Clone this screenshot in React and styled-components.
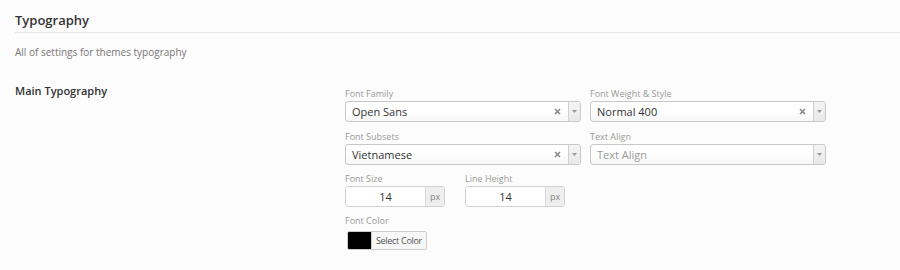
import React from "react";
import styled, { createGlobalStyle } from "styled-components";

const Global = createGlobalStyle`
  html, body { margin: 0; padding: 0; background: #fcfcfc; }
  body { font-family: "Open Sans", "Liberation Sans", sans-serif; color: #333; }
  * { box-sizing: border-box; }
`;

const Page = styled.div`
  padding: 0 0 0 15px;
`;

const Header = styled.h2`
  margin: 0;
  padding: 11px 0 3px;
  font-size: 13px;
  line-height: 18px;
  font-weight: 600;
  color: #333;
  border-bottom: 1px solid #e6e6e6;
`;

const Desc = styled.p`
  margin: 12px 0 0;
  font-size: 10px;
  line-height: 14px;
  color: #777;
`;

const Section = styled.div`
  display: flex;
  margin-top: 24px;
`;

const SectionTitle = styled.div`
  width: 330px;
  flex: none;
  font-size: 11px;
  line-height: 15px;
  font-weight: 600;
  color: #333;
`;

const Fields = styled.div`
  padding-top: 5px;
  display: flex;
  flex-direction: column;
  gap: 8px;
`;

const Row = styled.div`
  display: flex;
  gap: ${(p) => p.$gap || 9}px;
  margin-bottom: ${(p) => p.$mb || 0}px;
`;

const Field = styled.div`
  display: flex;
  flex-direction: column;
  width: ${(p) => p.$w}px;
`;

const Label = styled.label`
  font-size: 9px;
  line-height: 12px;
  color: #999;
  margin-bottom: ${(p) => p.$mb ?? 1}px;
`;

const SelectBox = styled.div`
  display: flex;
  align-items: stretch;
  height: 21px;
  border: 1px solid #c8c8c8;
  border-radius: 3px;
  background: linear-gradient(#ffffff 0%, #ffffff 50%, #f6f6f6 100%);
  overflow: hidden;
`;

const SelectValue = styled.span`
  flex: 1;
  padding-left: 6px;
  font-size: 11px;
  line-height: 19px;
  color: ${(p) => (p.$placeholder ? "#999" : "#333")};
`;

const Clear = styled.span`
  width: 22px;
  display: flex;
  align-items: center;
  justify-content: center;
`;

const Arrow = styled.span`
  width: 12px;
  border-left: 1px solid #d0d0d0;
  background: linear-gradient(#f4f4f4, #e8e8e8);
  display: flex;
  align-items: center;
  justify-content: center;
`;

const NumberWrap = styled.div`
  display: flex;
  width: 100px;
  height: 21px;
  border: 1px solid #d2d2d2;
  border-radius: 3px;
  overflow: hidden;
  background: #fff;
`;

const NumberValue = styled.span`
  flex: 1;
  text-align: center;
  font-size: 11px;
  line-height: 19px;
  color: #333;
`;

const Addon = styled.span`
  width: 19px;
  border-left: 1px solid #d8d8d8;
  background: #eeeeee;
  font-size: 9px;
  line-height: 19px;
  color: #888;
  text-align: center;
`;

const ColorButton = styled.div`
  display: flex;
  margin-left: 2px;
  width: 80px;
  height: 19px;
  border: 1px solid #ccc;
  border-radius: 2px;
  background: #f7f7f7;
  overflow: hidden;
`;

const Swatch = styled.span`
  width: 23px;
  background: #000;
`;

const ColorText = styled.span`
  flex: 1;
  font-size: 9px;
  letter-spacing: -0.3px;
  line-height: 17px;
  text-align: center;
  color: #555;
  border-left: 1px solid #ccc;
`;

const XIcon = () => (
  <svg width="7" height="7" viewBox="0 0 7 7">
    <path d="M1 1L6 6M6 1L1 6" stroke="#888" strokeWidth="1.6" />
  </svg>
);

const Tri = () => (
  <svg width="5" height="3" viewBox="0 0 5 3">
    <path d="M0 0H5L2.5 3Z" fill="#999" />
  </svg>
);

const Select = ({ value, placeholder, clearable = true }) => (
  <SelectBox>
    <SelectValue $placeholder={!value}>{value || placeholder}</SelectValue>
    {clearable && value && (
      <Clear>
        <XIcon />
      </Clear>
    )}
    <Arrow>
      <Tri />
    </Arrow>
  </SelectBox>
);

export default function App() {
  return (
    <Page>
      <Global />
      <Header>Typography</Header>
      <Desc>All of settings for themes typography</Desc>
      <Section>
        <SectionTitle>Main Typography</SectionTitle>
        <Fields>
          <Row $mb={1}>
            <Field $w={236}>
              <Label>Font Family</Label>
              <Select value="Open Sans" />
            </Field>
            <Field $w={236}>
              <Label>Font Weight &amp; Style</Label>
              <Select value="Normal 400" />
            </Field>
          </Row>
          <Row>
            <Field $w={236}>
              <Label>Font Subsets</Label>
              <Select value="Vietnamese" />
            </Field>
            <Field $w={236}>
              <Label>Text Align</Label>
              <Select placeholder="Text Align" />
            </Field>
          </Row>
          <Row $gap={20}>
            <Field $w={100}>
              <Label>Font Size</Label>
              <NumberWrap>
                <NumberValue>14</NumberValue>
                <Addon>px</Addon>
              </NumberWrap>
            </Field>
            <Field $w={100}>
              <Label>Line Height</Label>
              <NumberWrap>
                <NumberValue>14</NumberValue>
                <Addon>px</Addon>
              </NumberWrap>
            </Field>
          </Row>
          <Row>
            <Field $w={120}>
              <Label $mb={4}>Font Color</Label>
              <ColorButton>
                <Swatch />
                <ColorText>Select Color</ColorText>
              </ColorButton>
            </Field>
          </Row>
        </Fields>
      </Section>
    </Page>
  );
}
